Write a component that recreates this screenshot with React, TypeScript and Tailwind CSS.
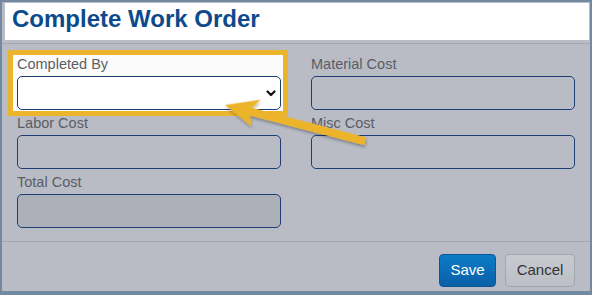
import * as React from 'react';

interface FieldProps {
  label: string;
  children?: React.ReactNode;
  highlight?: boolean;
}

function Field({ label, children, highlight }: FieldProps) {
  return (
    <div className="relative">
      {highlight && (
        <div className="absolute -left-[9px] -top-[6px] -right-[7px] -bottom-[6px] border-[5px] border-[#ecb42b] bg-[#fbfbfb]" />
      )}
      <div className="relative">
        <div className={`h-[17px] text-[14.5px] leading-[17px] ${highlight ? 'text-[#5e5f63]' : 'text-[#595c65]'}`}>
          {label}
        </div>
        <div className="mt-[3px]">{children}</div>
      </div>
    </div>
  );
}

function TextBox({ disabled }: { disabled?: boolean }) {
  return (
    <div
      className={`h-[34px] rounded-[5px] border border-[#1c3e72] ${disabled ? 'bg-[#adb0b8]' : 'bg-transparent'}`}
    />
  );
}

function SelectBox() {
  return (
    <div className="flex h-[34px] items-center justify-end rounded-[5px] border border-[#1c3e72] bg-white pr-[4px]">
      <svg width="10" height="7" viewBox="0 0 10 7">
        <polyline points="1.5,1.5 5,5 8.5,1.5" fill="none" stroke="#111" strokeWidth="2.2" strokeLinecap="round" strokeLinejoin="round" />
      </svg>
    </div>
  );
}

export default function App() {
  return (
    <div className="relative h-[295px] w-[592px] overflow-hidden font-['Liberation_Sans',Arial,sans-serif]">
      <div className="flex h-full flex-col border-x-2 border-t-2 border-b-4 border-[#7189a1] bg-[#b9bcc5]">
        <div className="ml-[3px] mr-[1px] mt-[1px] h-[37px] bg-white pl-[7px] pt-[4px]">
          <h1 className="text-[24px] font-bold leading-none text-[#0c4a8c]">Complete Work Order</h1>
        </div>

        <div className="mt-[3px] grid grid-cols-2 gap-x-[30px] gap-y-[5px] border-y border-[#a4a7af] px-[15px] pt-[12px] pb-[13px]">
          <Field label="Completed By" highlight>
            <SelectBox />
          </Field>
          <Field label="Material Cost">
            <TextBox />
          </Field>
          <Field label="Labor Cost">
            <TextBox />
          </Field>
          <Field label="Misc Cost">
            <TextBox />
          </Field>
          <Field label="Total Cost">
            <TextBox disabled />
          </Field>
        </div>

        <div className="flex justify-end gap-[9px] pr-[15px] pt-[12px]">
          <button className="h-[33px] w-[57px] rounded-[4px] border border-[#0a5795] bg-gradient-to-b from-[#0c7bc8] to-[#0a60a6] text-[15px] text-white">
            Save
          </button>
          <button className="h-[33px] w-[70px] rounded-[4px] border border-[#a2a5ac] bg-gradient-to-b from-[#c8cad0] to-[#bcbfc6] text-[15px] text-[#333]">
            Cancel
          </button>
        </div>
      </div>

      {/* annotation arrow */}
      <svg className="pointer-events-none absolute left-0 top-0" width="592" height="295" viewBox="0 0 592 295">
        <defs>
          <filter id="arrowShadow" x="-10%" y="-30%" width="130%" height="180%">
            <feDropShadow dx="1" dy="2" stdDeviation="1.5" floodColor="#000" floodOpacity="0.3" />
          </filter>
        </defs>
        <g transform="translate(225 105) rotate(14.5)" filter="url(#arrowShadow)">
          <polygon points="0,0 33,-14 27,-4 145,-4 145,4 27,4 31,14" fill="#ecb42a" />
        </g>
      </svg>
    </div>
  );
}
